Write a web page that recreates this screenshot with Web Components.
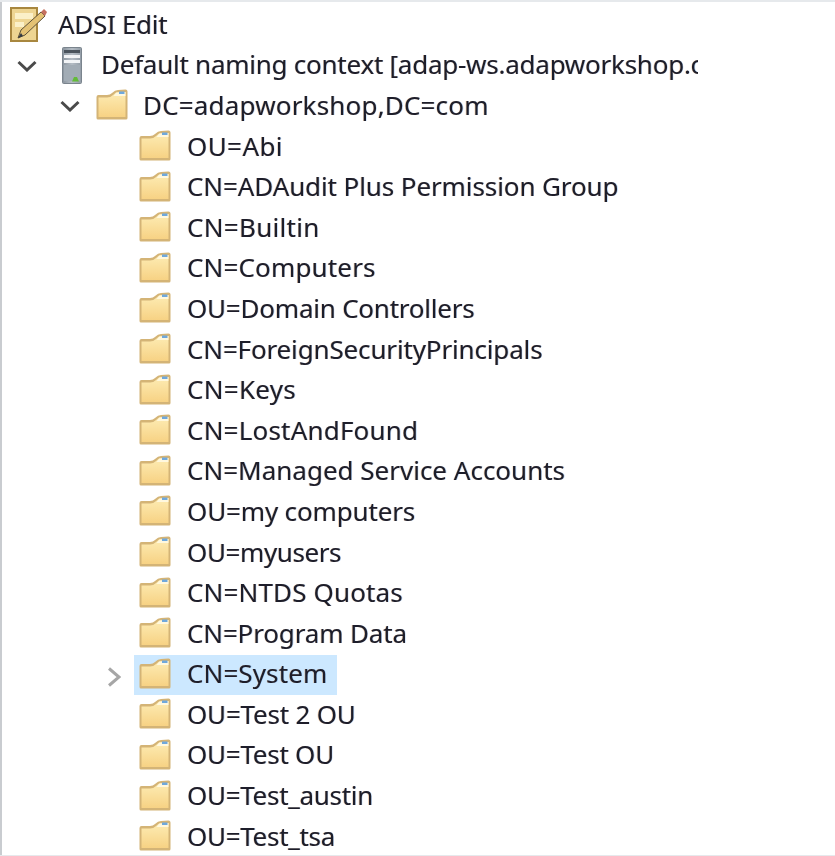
<!DOCTYPE html>
<html>
<head>
<meta charset="utf-8">
<title>ADSI Edit</title>
<style>
  html, body { margin: 0; padding: 0; background: #fff; }
  body { width: 835px; height: 856px; overflow: hidden; }
</style>
</head>
<body>
<adsi-tree>
  <tree-row icon="adsi" indent="0" track="-.3">ADSI Edit</tree-row>
  <tree-row icon="server" indent="1" expander="open" track="-.25">Default naming context [adap-ws.adapworkshop.com]</tree-row>
  <tree-row icon="folder" indent="2" expander="open" track=".18">DC=adapworkshop,DC=com</tree-row>
  <tree-row icon="folder" indent="3" track=".4">OU=Abi</tree-row>
  <tree-row icon="folder" indent="3" track="-.1">CN=ADAudit Plus Permission Group</tree-row>
  <tree-row icon="folder" indent="3" track=".3">CN=Builtin</tree-row>
  <tree-row icon="folder" indent="3" track=".15">CN=Computers</tree-row>
  <tree-row icon="folder" indent="3" track="-.22">OU=Domain Controllers</tree-row>
  <tree-row icon="folder" indent="3" track="-.15">CN=ForeignSecurityPrincipals</tree-row>
  <tree-row icon="folder" indent="3" track=".3">CN=Keys</tree-row>
  <tree-row icon="folder" indent="3" track=".2">CN=LostAndFound</tree-row>
  <tree-row icon="folder" indent="3">CN=Managed Service Accounts</tree-row>
  <tree-row icon="folder" indent="3" track="-.15">OU=my computers</tree-row>
  <tree-row icon="folder" indent="3" track="-.4">OU=myusers</tree-row>
  <tree-row icon="folder" indent="3" track=".15">CN=NTDS Quotas</tree-row>
  <tree-row icon="folder" indent="3" track="-.15">CN=Program Data</tree-row>
  <tree-row icon="folder" indent="3" expander="closed" selected track=".1">CN=System</tree-row>
  <tree-row icon="folder" indent="3" track="-.2">OU=Test 2 OU</tree-row>
  <tree-row icon="folder" indent="3" track="-.25">OU=Test OU</tree-row>
  <tree-row icon="folder" indent="3" track="-.3">OU=Test_austin</tree-row>
  <tree-row icon="folder" indent="3" track="-.3">OU=Test_tsa</tree-row>
</adsi-tree>

<script>
const ICONS = {
  folder: `<svg class="folder" width="32" height="31" viewBox="0 0 32 31">
    <defs><linearGradient id="f" x1="0" y1="0" x2="0" y2="1">
      <stop offset="0" stop-color="#fdecb4"/><stop offset="1" stop-color="#f7d284"/>
    </linearGradient></defs>
    <path d="M0.500 8 Q0.500 6 2.500 6 L11 6 Q14 6 16 4 Q19 1 22 1 L29.500 0.500 Q31.500 0.500 31.500 2.500 L31.500 29 Q31.500 30.500 30 30.500 L2 30.500 Q0.500 30.500 0.500 29 Z" fill="#d4b476"/>
    <path d="M2.500 8.500 L11 8.500 Q14.500 8.500 17 6 L20 3.500 L29.500 3 L29.500 28 L2.500 28 Z" fill="url(#f)"/>
    <path d="M20.500 3.500 L29.500 3 L29.500 7 L17.500 7 Z" fill="#fff8de"/>
    <rect x="23" y="2.500" width="5.500" height="2.500" fill="#6fa8dc"/>
  </svg>`,
  server: `<svg width="20" height="37" viewBox="0 0 20 37">
    <defs><linearGradient id="s" x1="0" y1="0" x2="1" y2="0">
      <stop offset="0" stop-color="#8a949e"/><stop offset=".5" stop-color="#b4bcc4"/><stop offset="1" stop-color="#929ca6"/>
    </linearGradient></defs>
    <rect x="0.500" y="0.500" width="19" height="36" rx="1" fill="url(#s)" stroke="#7a848d"/>
    <rect x="2" y="3" width="16" height="3" fill="#4a535c"/>
    <rect x="2" y="8" width="16" height="3" fill="#f2f4f6"/>
    <rect x="2" y="13" width="16" height="3" fill="#f2f4f6"/>
    <rect x="2" y="18" width="16" height="16" fill="#a2acb5"/>
    <path d="M10 34.500 L12 30 L15 30 L17 34.500 Z" fill="#63bb38"/>
  </svg>`,
  adsi: `<svg width="38" height="36" viewBox="0 0 38 36">
    <rect x="1" y="1" width="26" height="33" fill="#eed592" stroke="#a8873f" stroke-width="2"/>
    <rect x="5" y="6" width="18" height="6" fill="#fbf0c8"/>
    <rect x="5" y="15" width="9" height="5" fill="#fbf0c8"/>
    <path d="M8 31 L11 23 L31 5 L35 9 L15 28 Z" fill="#e4c274" stroke="#5e5239"/>
    <path d="M31 5 L34 2 L37 5 L35 9 Z" fill="#c5705f"/>
    <path d="M8 31 L11 26 L13 29 Z" fill="#333a44"/>
  </svg>`
};

// x positions of each column, taken per icon type
const COLUMNS = {
  adsi:   { chev: 0,   icon: 10, text: 58 },
  server: { chev: 17,  icon: 62, text: 101 },
  top:    { chev: 60,  icon: 96, text: 143 },
  child:  { chev: 107, icon: 139, text: 187 },
};

class AdsiTree extends HTMLElement {
  constructor() {
    super();
    this.attachShadow({ mode: 'open' }).innerHTML = `
      <style>
        :host {
          display: block;
          box-sizing: border-box;
          width: 835px;
          height: 856px;
          overflow: hidden;
          border-top: 2px solid #e6e9ec;
          border-bottom: 1px solid #e6e9ec;
          position: relative;
        }
        .rule { position: absolute; left: 0; top: -2px; width: 698px; height: 2px; background: #d0d3d6; }
        .edge { position: absolute; left: 0; top: 0; bottom: 0; width: 2px; background: #c9ccd0; }
        .rows {
          width: 698px;
          overflow: hidden;
          padding-top: 3px;
          display: grid;
          grid-template-columns: 698px;
          grid-auto-rows: 40.6px;
          font-family: "Noto Sans", "Open Sans", sans-serif;
          font-size: 26px;
          color: #1d1d2a;
          text-shadow: -0.6px 0 rgba(225, 130, 30, .35), 0.6px 0 rgba(40, 130, 230, .35);
          filter: blur(0.45px);
        }
      </style>
      <div class="rule"></div>
      <div class="edge"></div>
      <div class="rows"><slot></slot></div>`;
  }
}

class TreeRow extends HTMLElement {
  connectedCallback() {
    const indent = Number(this.getAttribute('indent') || 0);
    const expander = this.getAttribute('expander');
    const icon = this.getAttribute('icon');
    const track = this.getAttribute('track') || 0;
    const chevron = expander === 'open'
      ? '<svg width="20" height="12" viewBox="0 0 20 12"><path d="M1.500 2 L10 10 L18.500 2" fill="none" stroke="#4a4a4a" stroke-width="3"/></svg>'
      : expander === 'closed'
        ? '<svg style="margin-top:4px" width="14" height="20" viewBox="0 0 14 20"><path d="M2 1.500 L12 10 L2 18.500" fill="none" stroke="#a6a6a6" stroke-width="3"/></svg>'
        : '';
    const col = COLUMNS[icon] || (indent === 2 ? COLUMNS.top : COLUMNS.child);
    const iconHtml = ICONS[icon];
    this.attachShadow({ mode: 'open' }).innerHTML = `
      <style>
        :host { display: block; min-width: 0; letter-spacing: ${track}px; }
        .row {
          height: 100%;
          display: grid;
          grid-template-columns: ${col.chev}px ${col.icon - col.chev}px ${col.text - col.icon}px 1fr;
          align-items: center;
          white-space: nowrap;
        }
        .chev, .icon { display: flex; align-items: center; }
        .folder { margin-top: -3px; }
        .label { line-height: 40px; margin-top: -3px; }
        .sel {
          grid-column: 3 / 5;
          margin-left: -5px;
          width: 198px;
          height: 40px;
          background: #cce8ff;
          display: grid;
          grid-template-columns: ${col.text - col.icon}px 1fr;
          align-items: center;
          padding-left: 5px;
        }
      </style>
      <div class="row">
        <span></span>
        <span class="chev">${chevron}</span>
        ${this.hasAttribute('selected')
          ? `<div class="sel"><span class="icon">${iconHtml}</span><span class="label"><slot></slot></span></div>`
          : `<span class="icon">${iconHtml}</span><span class="label"><slot></slot></span>`}
      </div>`;
  }
}

customElements.define('adsi-tree', AdsiTree);
customElements.define('tree-row', TreeRow);
</script>
</body>
</html>
